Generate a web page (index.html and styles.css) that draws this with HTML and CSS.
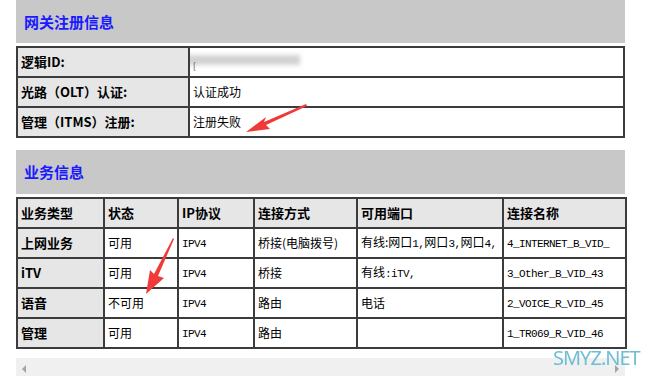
FILE: index.html
```html
<!DOCTYPE html>
<html>
<head>
<meta charset="utf-8">
<link rel="stylesheet" href="styles.css">
</head>
<body>
<div class="page">
  <div class="sec-head">网关注册信息</div>
  <table class="info">
    <colgroup><col class="c-label"><col></colgroup>
    <tr><td class="lbl">逻辑ID:</td><td class="val"><span class="blur"></span><span class="mark">[</span></td></tr>
    <tr><td class="lbl">光路（OLT）认证:</td><td class="val">认证成功</td></tr>
    <tr><td class="lbl">管理（ITMS）注册:</td><td class="val">注册失败</td></tr>
  </table>

  <div class="sec-head sec-two">业务信息</div>
  <table class="svc">
    <colgroup>
      <col class="w1"><col class="w2"><col class="w3"><col class="w4"><col class="w5"><col class="w6">
    </colgroup>
    <tr class="head">
      <td>业务类型</td><td>状态</td><td>IP协议</td><td>连接方式</td><td>可用端口</td><td>连接名称</td>
    </tr>
    <tr><td class="lbl">上网业务</td><td>可用</td><td><span class="m">IPV4</span></td><td>桥接(电脑拨号)</td><td>有线:网口<span class="m">1,</span>网口<span class="m">3,</span>网口<span class="m">4,</span></td><td><span class="m">4_INTERNET_B_VID_</span></td></tr>
    <tr><td class="lbl">iTV</td><td>可用</td><td><span class="m">IPV4</span></td><td>桥接</td><td>有线<span class="m">:iTV,</span></td><td><span class="m">3_Other_B_VID_43</span></td></tr>
    <tr><td class="lbl">语音</td><td>不可用</td><td><span class="m">IPV4</span></td><td>路由</td><td>电话</td><td><span class="m">2_VOICE_R_VID_45</span></td></tr>
    <tr><td class="lbl">管理</td><td>可用</td><td><span class="m">IPV4</span></td><td>路由</td><td></td><td><span class="m">1_TR069_R_VID_46</span></td></tr>
  </table>

  <div class="hscroll">
    <span class="arr-l"></span>
    <span class="arr-r"></span>
  </div>
</div>

<svg class="arrow arrow-one" width="70" height="36" viewBox="0 0 70 36">
  <path d="M62 2 L20 20 L22 15 L2 30 L26 27 L22 23 L63 4 Z" fill="#f03a3a"/>
</svg>
<svg class="arrow arrow-two" width="40" height="62" viewBox="0 0 40 62">
  <path d="M36 2 L17 38 L13 34 L9 58 L27 42 L21 40 L37 3 Z" fill="#f03a3a"/>
</svg>

<div class="watermark">SMYZ.NET</div>
</body>
</html>
```

FILE: styles.css
```css
html, body {
  margin: 0;
  padding: 0;
  background: #ffffff;
}

body {
  font-family: "Noto Sans CJK SC", "Liberation Sans", sans-serif;
  font-size: 12px;
  color: #000;
  width: 650px;
  height: 376px;
  overflow: hidden;
  position: relative;
}

.page {
  padding-left: 16px;
  width: 609px;
}

.sec-head {
  height: 43px;
  background: #c8c8c8;
  color: #1a1aff;
  font-weight: bold;
  font-size: 15px;
  line-height: 43px;
  padding-left: 8px;
}

.sec-two {
  margin-top: 12px;
  height: 44px;
  line-height: 44px;
}

table {
  width: 609px;
  border-collapse: collapse;
  table-layout: fixed;
  margin-top: 3px;
  border: 2px solid #3c3c3c;
}

td {
  border: 2px solid #3c3c3c;
  padding: 0 0 0 3px;
  height: 28px;
  box-sizing: border-box;
  white-space: nowrap;
  overflow: hidden;
  vertical-align: middle;
  font-size: 12px;
  line-height: 14px;
}

tr {
  height: 30px;
}

.c-label { width: 172px; }

.lbl {
  background: #e6e6e6;
  font-weight: bold;
  font-size: 13px;
}

.val {
  position: relative;
}

.blur {
  position: absolute;
  left: -6px;
  top: 7px;
  width: 116px;
  height: 10px;
  background: #d2d2d2;
  filter: blur(2px);
}

.mark {
  position: relative;
  font-size: 8px;
  color: #333;
  top: 3px;
}

.svc .head td {
  background: #e6e6e6;
  font-weight: bold;
  font-size: 13px;
}

.w1 { width: 87px; }
.w2 { width: 74px; }
.w3 { width: 76px; }
.w4 { width: 103px; }
.w5 { width: 146px; }
.w6 { width: 123px; }

.m {
  font-family: "Liberation Mono", monospace;
  font-size: 11px;
  letter-spacing: -0.6px;
}

.hscroll {
  margin-top: 9px;
  height: 20px;
  background: #f0f0f0;
  position: relative;
}

.arr-l {
  position: absolute;
  left: 6px;
  top: 7px;
  width: 0;
  height: 0;
  border-top: 4px solid transparent;
  border-bottom: 4px solid transparent;
  border-right: 4px solid #a3a3a3;
}

.arr-r {
  position: absolute;
  right: 6px;
  top: 7px;
  width: 0;
  height: 0;
  border-top: 4px solid transparent;
  border-bottom: 4px solid transparent;
  border-left: 4px solid #a3a3a3;
}

.arrow {
  position: absolute;
}

.arrow-one {
  left: 244px;
  top: 102px;
}

.arrow-two {
  left: 137px;
  top: 236px;
}

.watermark {
  position: absolute;
  left: 553px;
  top: 344px;
  font-family: "Noto Sans", "Liberation Sans", sans-serif;
  font-size: 20px;
  color: #5fb8d0;
  opacity: 0.9;
  letter-spacing: -1px;
}
```
